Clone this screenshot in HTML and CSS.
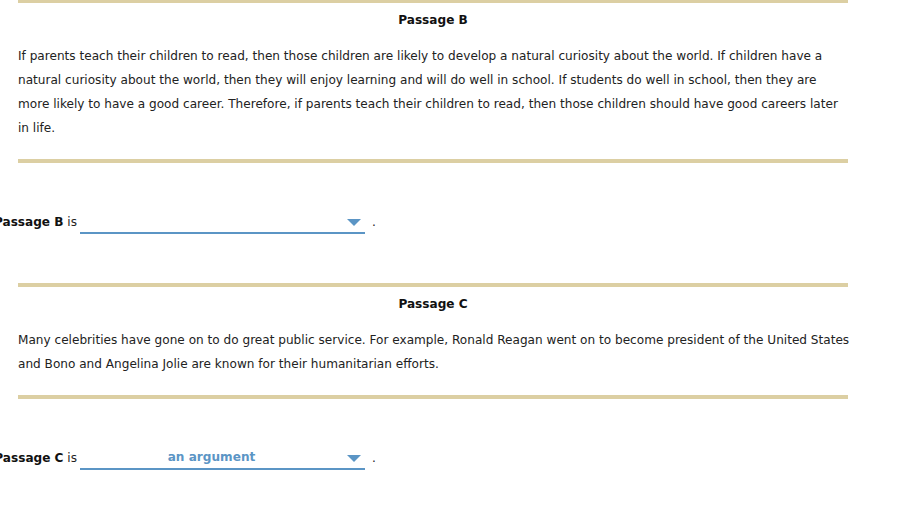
FILE: index.html
```html
<!DOCTYPE html>
<html lang="en">

<head>
  <meta charset="UTF-8">
  <meta name="viewport" content="width=device-width, initial-scale=1.0">
  <title>Passages</title>
  <link rel="stylesheet" href="styles.css">
</head>

<body>
  <div class="page">
    <div class="passage">
      <div class="passage-title">Passage B</div>
      <p>If parents teach their children to read, then those children are likely to develop a natural curiosity about the world. If children have a natural curiosity about the world, then they will enjoy learning and will do well in school. If students do well in school, then they are more likely to have a good career. Therefore, if parents teach their children to read, then those children should have good careers later in life.</p>
    </div>

    <div class="question">
      <span class="label"><b>Passage B</b> is</span>
      <div class="dropdown">
        <span class="dropdown-value"></span>
        <span class="dropdown-arrow"></span>
      </div>
      <span class="period">.</span>
    </div>

    <div class="passage">
      <div class="passage-title">Passage C</div>
      <p class="wide">Many celebrities have gone on to do great public service. For example, Ronald Reagan went on to become president of the United States and Bono and Angelina Jolie are known for their humanitarian efforts.</p>
    </div>

    <div class="question">
      <span class="label"><b>Passage C</b> is</span>
      <div class="dropdown">
        <span class="dropdown-value">an argument</span>
        <span class="dropdown-arrow"></span>
      </div>
      <span class="period">.</span>
    </div>
  </div>
</body>

</html>
```

FILE: styles.css
```css
* {
  box-sizing: border-box;
}

body {
  margin: 0;
  padding: 0;
  background: #fff;
  color: #222;
  font-family: 'DejaVu Sans', Verdana, sans-serif;
  font-size: 12.1px;
  line-height: 24px;
}

.page {
  margin-top: -1px;
}

/* passage boxes with the gold rules */
.passage {
  width: 830px;
  margin-left: 18px;
  border-top: 4px solid #dccfa3;
  border-bottom: 4px solid #dccfa3;
  padding: 5px 0 19px;
}

.passage-title {
  text-align: center;
  font-weight: bold;
  color: #111;
}

.passage p {
  margin: 12px 0 0;
}

.passage p.wide {
  margin-right: -10px;
}

/* "Passage X is ____ ." rows */
.question {
  display: flex;
  align-items: center;
  height: 24px;
  margin: 47px 0 49px;
}

.label {
  width: 77px;
  text-align: right;
  white-space: nowrap;
  direction: rtl;
}

.label b {
  color: #111;
}

.dropdown {
  position: relative;
  display: flex;
  align-items: center;
  width: 285px;
  height: 24px;
  margin-left: 3px;
  border-bottom: 2px solid #5b95c5;
  padding-right: 22px;
}

.dropdown-value {
  flex: 1;
  text-align: center;
  color: #5b95c5;
  font-weight: bold;
}

.dropdown-arrow {
  position: absolute;
  right: 4px;
  top: 9px;
  width: 0;
  height: 0;
  border-left: 7px solid transparent;
  border-right: 7px solid transparent;
  border-top: 7px solid #5b95c5;
}

.period {
  margin-left: 7px;
}
```
